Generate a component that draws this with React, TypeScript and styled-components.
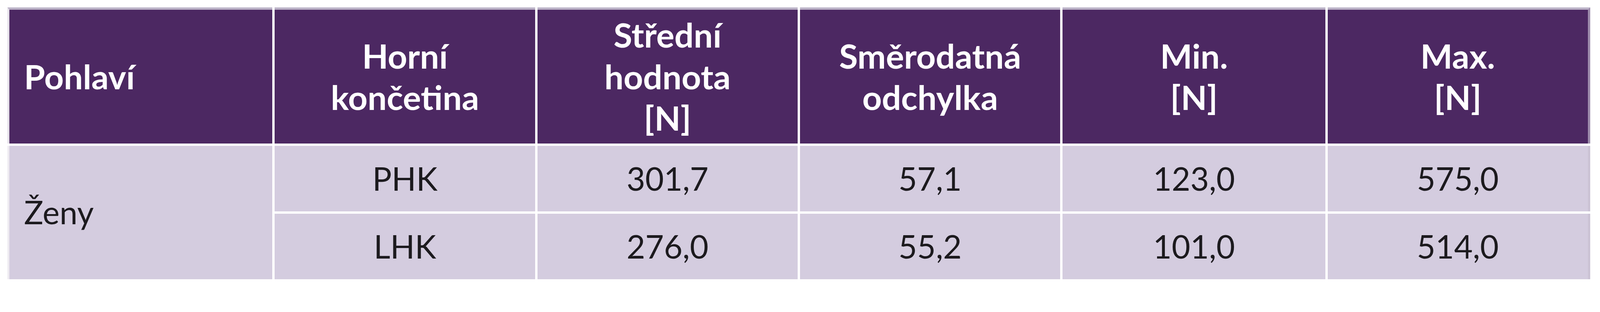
import styled, { createGlobalStyle } from "styled-components"

const GlobalStyle = createGlobalStyle`
  html {
    font-size: calc(100vw / 442.4);
  }
  body {
    margin: 0;
    padding: 0;
    background: #ffffff;
  }
`

const Page = styled.div`
  padding: 2rem 2.7rem 0 2rem;
  font-family: "Lato", "Open Sans", sans-serif;
`

const Table = styled.div`
  display: grid;
  grid-template-columns: 733fr 720fr 719fr 720fr 726fr 726fr;
  grid-template-rows: 37.7rem 18.2rem 18.1rem;
  column-gap: 0.65rem;
  row-gap: 0.65rem;
`

const HeadCell = styled.div<{ $left?: boolean; $first?: boolean; $last?: boolean }>`
  display: flex;
  align-items: center;
  justify-content: ${(p) => (p.$left ? "flex-start" : "center")};
  text-align: ${(p) => (p.$left ? "left" : "center")};
  padding-left: ${(p) => (p.$left ? "4.1rem" : "0")};
  background: #4c2862;
  color: #ffffff;
  font-weight: 700;
  font-size: 9.4rem;
  line-height: 11.5rem;
  border-top: 0.7rem solid #bbb2c7;
  border-left: ${(p) => (p.$first ? "0.6rem solid #e6e2ea" : "none")};
  border-right: ${(p) => (p.$last ? "0.7rem solid #9c8bab" : "none")};
`

const BodyCell = styled.div<{ $left?: boolean; $first?: boolean; $last?: boolean; $span?: number }>`
  display: flex;
  align-items: center;
  justify-content: ${(p) => (p.$left ? "flex-start" : "center")};
  padding-left: ${(p) => (p.$left ? "4.1rem" : "0")};
  grid-row: ${(p) => (p.$span ? `span ${p.$span}` : "auto")};
  background: #d4ccdf;
  color: #1c1a1e;
  font-weight: 400;
  font-size: 8.9rem;
  line-height: 1;
  border-left: ${(p) => (p.$first ? "0.6rem solid #eeebf1" : "none")};
  border-right: ${(p) => (p.$last ? "0.7rem solid #cbc3d5" : "none")};
`

const rows = [
  ["PHK", "301,7", "57,1", "123,0", "575,0"],
  ["LHK", "276,0", "55,2", "101,0", "514,0"],
]

export default function App() {
  return (
    <>
      <GlobalStyle />
      <Page>
        <Table>
          <HeadCell $left $first>Pohlaví</HeadCell>
          <HeadCell>Horní<br />končetina</HeadCell>
          <HeadCell>Střední<br />hodnota<br />[N]</HeadCell>
          <HeadCell>Směrodatná<br />odchylka</HeadCell>
          <HeadCell>Min.<br />[N]</HeadCell>
          <HeadCell $last>Max.<br />[N]</HeadCell>

          <BodyCell $left $first $span={2}>Ženy</BodyCell>
          {rows.map((r, i) => (
            r.map((v, j) => (
              <BodyCell key={`${i}-${j}`} $last={j === r.length - 1}>{v}</BodyCell>
            ))
          ))}
        </Table>
      </Page>
    </>
  )
}
